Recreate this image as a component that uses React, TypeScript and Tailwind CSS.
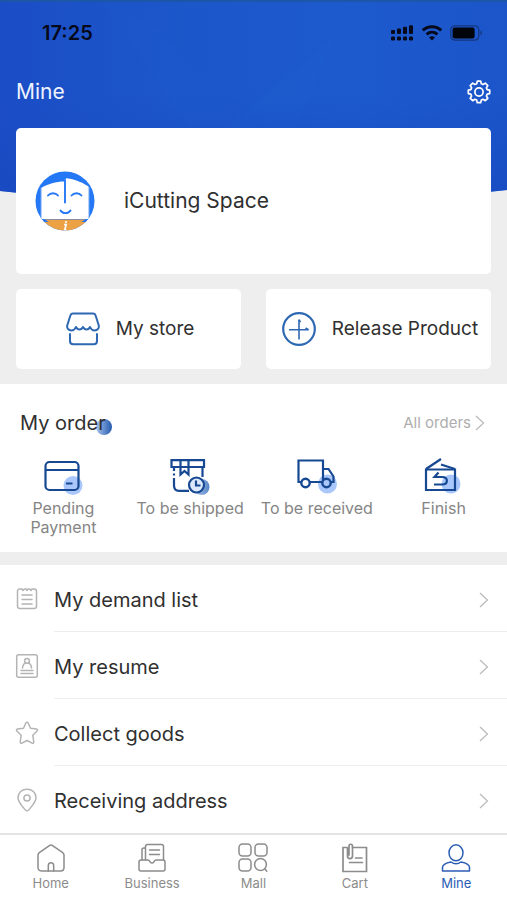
import { ReactNode, useState } from "react";

const SignalIcon = () => (
  <svg width="24" height="18" viewBox="0 0 24 18" fill="#05091a" aria-hidden="true">
    {[0, 1, 2, 3].map((i) => (
      <g key={i}>
        <rect x={1 + i * 6} y={6 - i * 1.6} width="4" height={4 + i * 1.6} rx="1" />
        <rect x={1 + i * 6} y="12.5" width="4" height="4" rx="1.2" />
      </g>
    ))}
  </svg>
);

const WifiIcon = () => (
  <svg width="22" height="16" viewBox="0 0 22 16" fill="none" stroke="#05091a" strokeWidth="3" aria-hidden="true">
    <path d="M1.8 5.4C7 .6 15 .6 20.2 5.4" />
    <path d="M5.6 9.4c3.2-2.8 7.6-2.8 10.8 0" />
    <path d="M11 15.4l-2.9-3c1.8-1.4 4-1.4 5.8 0z" fill="#05091a" stroke="none" />
  </svg>
);

const BatteryIcon = () => (
  <svg width="33" height="16" viewBox="0 0 33 16" aria-hidden="true">
    <rect x=".8" y=".8" width="28" height="14.4" rx="4" fill="none" stroke="#16367f" strokeWidth="1.2" />
    <rect x="2.6" y="2.6" width="22" height="10.8" rx="2" fill="#02040c" />
    <path d="M30.5 5.5c2 .9 2 4.1 0 5z" fill="#16367f" />
  </svg>
);

const GearIcon = () => (
  <svg width="24" height="24" viewBox="0 0 24 24" fill="none" stroke="#fff" strokeWidth="1.7" strokeLinejoin="round" aria-hidden="true">
    <path d="M10.3 1.2h3.4l.6 2.5 1.8.8 2.2-1.4 2.5 2.5-1.4 2.2.8 1.8 2.5.6v3.4l-2.5.6-.8 1.8 1.4 2.3-2.5 2.4-2.2-1.4-1.8.8-.6 2.6h-3.4l-.6-2.6-1.8-.8-2.2 1.4-2.5-2.4 1.4-2.3-.8-1.8-2.5-.6v-3.4l2.5-.6.8-1.8-1.4-2.2 2.5-2.5 2.2 1.4 1.8-.8z" />
    <circle cx="12" cy="12" r="4.1" />
  </svg>
);

const Avatar = () => (
  <svg width="60" height="60" viewBox="0 0 60 60" role="img" aria-label="iCutting Space avatar">
    <defs>
      <clipPath id="avatarCircle">
        <circle cx="30" cy="30" r="29.5" />
      </clipPath>
    </defs>
    <g clipPath="url(#avatarCircle)">
      <rect width="60" height="60" fill="#2478f6" />
      <path d="M6 17C13 13 21 10.5 29.3 10.5V9l2.2-1.800C41 8.500 49 12 54 16V48H6z" fill="#fff" />
      <path d="M6 17v31M54 16v32" stroke="#6ba2f5" strokeWidth="1" />
      <path d="M8 48.500h44L49 60H11z" fill="#eda145" />
      <path d="M0 48h9l5 3H4zM60 48h-9l-5 3h10z" fill="#2478f6" />
      <g fill="none" stroke="#2478f6" strokeWidth="1.9" strokeLinecap="round">
        <path d="M30 9v22.500" />
        <path d="M13 24.500c2.500-3 7.500-3 10 0M36.500 24.500c2.500-3 7.500-3 10 0" />
        <path d="M25.500 39.500c2 3.500 8 3.500 10 0" />
      </g>
      <path d="M29 53.500h2.200l-1.600 5.500h2" fill="none" stroke="#fff" strokeWidth="1.6" />
      <circle cx="31" cy="51" r="1.1" fill="#fff" />
    </g>
  </svg>
);

const StoreIcon = () => (
  <svg width="34" height="34" viewBox="0 0 34 34" fill="none" stroke="#2e68b3" strokeWidth="2" strokeLinecap="round" strokeLinejoin="round" aria-hidden="true">
    <path d="M7 1.500h20c1.500 0 2.300.8 2.700 2.200l3 9.500c.8 3-1.200 5.300-4 5.300-2.300 0-3.800-1.200-4.700-3.500-1.600 3.300-5.300 3.300-7 0-1.700 3.300-5.400 3.300-7 0-.9 2.300-2.400 3.500-4.700 3.500-2.800 0-4.800-2.300-4-5.300l3-9.500C4.700 2.300 5.500 1.500 7 1.500z" />
    <path d="M4 22v7c0 2 1.200 3.300 3.300 3.300h20.400c2.100 0 3.300-1.300 3.300-3.300v-7" />
  </svg>
);

const PlusIcon = () => (
  <svg width="34" height="34" viewBox="0 0 34 34" fill="none" stroke="#2e68b3" aria-hidden="true">
    <circle cx="17" cy="17" r="15.800" strokeWidth="2.2" />
    <path d="M17 8v19.500M7 17.800h19.500" strokeWidth="1.6" />
    <path d="M16.600 7.500l2 2.500M23.500 16l3 1.800" strokeWidth="1.6" />
  </svg>
);

const PaymentIcon = () => (
  <svg width="40" height="38" viewBox="0 0 40 38" fill="none" stroke="#174892" strokeWidth="2.2" aria-hidden="true">
    <circle cx="30" cy="27.500" r="9.500" fill="#a9c7fa" stroke="none" />
    <rect x="2.500" y="4" width="33" height="28" rx="4" />
    <path d="M2.500 12h33M23 25.500h6.500" />
  </svg>
);

const ShippedIcon = () => (
  <svg width="40" height="38" viewBox="0 0 40 38" fill="none" stroke="#174892" strokeWidth="2.2" aria-hidden="true">
    <defs>
      <linearGradient id="shipDot">
        <stop offset="0" stopColor="#bdd2f3" />
        <stop offset="1" stopColor="#5684c5" />
      </linearGradient>
    </defs>
    <circle cx="31.500" cy="29" r="8" fill="url(#shipDot)" stroke="none" />
    <path d="M1.500 2.200h32.500v6.800H1.500zM32.500 9v10" />
    <path d="M4 9v4M4 15.500v2M4 20v7.500c0 3.200 1.800 5.300 5 5.300h10" />
    <path d="M10.500 2.500v14l4-3.500 4 3.500v-14" />
    <circle cx="26.500" cy="27" r="7.500" fill="#dce8fb" />
    <path d="M26 22.500v5h4.500" />
  </svg>
);

const TruckIcon = () => (
  <svg width="42" height="38" viewBox="0 0 42 38" fill="none" stroke="#174892" strokeWidth="2.2" aria-hidden="true">
    <circle cx="31.500" cy="26" r="9.500" fill="#a9c7fa" stroke="none" />
    <path d="M5 24H2.500V2.500H27V24H13" />
    <path d="M27 11h5.500l5 7.500V24H35" />
    <circle cx="9.500" cy="25" r="4.200" fill="#fff" strokeWidth="2.4" />
    <circle cx="30.500" cy="25" r="4.200" fill="#a9c7fa" strokeWidth="2.4" />
  </svg>
);

const FinishIcon = () => (
  <svg width="40" height="38" viewBox="2 1 40 38" fill="none" stroke="#174892" strokeWidth="2.2" aria-hidden="true">
    <circle cx="29" cy="27" r="9.500" fill="#a9c7fa" stroke="none" />
    <path d="M4 12.500h29V33H4z" />
    <path d="M4 12L19 2M19 7.500L33 12" />
    <path d="M16.500 15.500L12.500 20H20c6.500 0 6.500 7.500 0 7.500h-8" />
  </svg>
);

const lineIcon = {
  width: 24,
  height: 24,
  viewBox: "0 0 24 24",
  fill: "none",
  stroke: "#b4b4b4",
  strokeWidth: 1.5,
  strokeLinecap: "round",
  strokeLinejoin: "round",
  "aria-hidden": true,
} as const;

const ListIcon = () => (
  <svg {...lineIcon}>
    <path d="M2.500 4.500c0-1.800.8-2.500 2.500-2.500h2l1 1.500L9.500 2h1.500l1 1.500L13 2h1.500L16 3.500 17 2h2c1.700 0 2.500.7 2.500 2.500v14.700c0 1.600-.8 2.300-2.500 2.300H5c-1.700 0-2.500-.7-2.500-2.300z" />
    <path d="M7 8h10M7 12.500h10M7 17h10" />
  </svg>
);

const ResumeIcon = () => (
  <svg {...lineIcon}>
    <rect x="1.700" y=".8" width="20.600" height="22.400" rx="2" />
    <circle cx="12" cy="6.800" r="2.400" />
    <path d="M7.500 14c.3-2.800 1.500-4.500 3-5M16.500 14c-.3-2.800-1.500-4.500-3-5M6 16.500h12M6 19.500h12" />
  </svg>
);

const StarIcon = () => (
  <svg {...lineIcon}>
    <path d="M11 1.800c.4-.9 1.600-.9 2 0l2.500 5.400 6 .8c1 .2 1.400 1.300.6 2l-4.300 4.200 1 6.900c.1 1-.8 1.600-1.700 1.100L12 19.500l-5.100 2.700c-.9.500-1.800-.1-1.700-1.100l1-6.900L1.900 10c-.8-.7-.4-1.800.6-2l6-.8z" />
  </svg>
);

const PinIcon = () => (
  <svg {...lineIcon}>
    <path d="M12 23c-1 0-9-8.500-9-13.500C3 4.500 7 1.200 12 1.200s9 3.300 9 8.300S13 23 12 23z" />
    <circle cx="12" cy="10" r="3.100" />
  </svg>
);

const Chevron = () => (
  <svg width="10" height="18" viewBox="0 0 10 18" fill="none" stroke="#bcbcbc" strokeWidth="1.3" aria-hidden="true">
    <path d="M1 2l7.500 7L1 16" />
  </svg>
);

const tabIcon = {
  width: 30,
  height: 30,
  viewBox: "0 0 30 30",
  fill: "none",
  stroke: "currentColor",
  strokeWidth: 1.5,
  strokeLinecap: "round",
  strokeLinejoin: "round",
  "aria-hidden": true,
} as const;

const HomeIcon = () => (
  <svg {...tabIcon}>
    <path d="M13.400 2.600c1-.7 2.200-.7 3.200 0l9.800 6.700c1 .7 1.600 1.600 1.600 2.800v12.400c0 2.200-1.200 3.500-3.500 3.500h-19C3.200 28 2 26.700 2 24.500V12.100c0-1.200.6-2.100 1.600-2.800z" />
    <path d="M12.300 28v-5.500c0-3.700 5.400-3.700 5.400 0V28" />
  </svg>
);

const BusinessIcon = () => (
  <svg {...tabIcon}>
    <path d="M8.500 17V3.500c0-1.200.7-2 2-2h14c1.300 0 2 .8 2 2V17M8.500 5H6.800C5.600 5 5 5.700 5 6.800V17" />
    <path d="M12.500 7h10M12.500 11.500h10" />
    <path d="M4 17h7.300c.8 0 1 .5 1.400 1.300 1 2.300 3.600 2.300 4.600 0 .4-.8.600-1.300 1.400-1.300H26c1.200 0 2 .8 2 2v7c0 1.300-.8 2-2 2H4c-1.200 0-2-.7-2-2v-7c0-1.200.8-2 2-2z" />
  </svg>
);

const MallIcon = () => (
  <svg {...tabIcon}>
    <rect x="1" y="1" width="12" height="12" rx="3.500" />
    <rect x="17" y="1" width="12" height="12" rx="3.500" />
    <rect x="1" y="16" width="12" height="12" rx="3.500" />
    <circle cx="22.500" cy="21.500" r="5.900" />
    <path d="M27 26l1.800 2.200" />
  </svg>
);

const CartIcon = () => (
  <svg {...tabIcon} strokeWidth={1.7}>
    <path d="M7 4.500H3v24h23.500v-24H12.500" strokeLinejoin="miter" />
    <path d="M7.500 5v8c0 3.500 5 3.500 5 0V3.500c0-3-3.500-3-3.500 0V12" />
    <path d="M15.500 15h6.500M9.500 19.500h13" />
  </svg>
);

const MineIcon = () => (
  <svg {...tabIcon}>
    <ellipse cx="15" cy="9.800" rx="7" ry="8" />
    <path d="M1.500 28v-3.500c0-2.800 3-4.500 8.500-5.500 3 2.200 7 2.200 10 0 5.500 1 8.500 2.700 8.500 5.500V28z" />
  </svg>
);

const orders: { name: string; icon: ReactNode }[] = [
  { name: "Pending Payment", icon: <PaymentIcon /> },
  { name: "To be shipped", icon: <ShippedIcon /> },
  { name: "To be received", icon: <TruckIcon /> },
  { name: "Finish", icon: <FinishIcon /> },
];

const links: { name: string; icon: ReactNode }[] = [
  { name: "My demand list", icon: <ListIcon /> },
  { name: "My resume", icon: <ResumeIcon /> },
  { name: "Collect goods", icon: <StarIcon /> },
  { name: "Receiving address", icon: <PinIcon /> },
];

const tabs: { name: string; icon: ReactNode }[] = [
  { name: "Home", icon: <HomeIcon /> },
  { name: "Business", icon: <BusinessIcon /> },
  { name: "Mall", icon: <MallIcon /> },
  { name: "Cart", icon: <CartIcon /> },
  { name: "Mine", icon: <MineIcon /> },
];

const HeaderBackdrop = () => (
  <svg className="absolute inset-x-0 top-0 h-[200px] w-full" viewBox="0 0 507 200" preserveAspectRatio="none" aria-hidden="true">
    <defs>
      <linearGradient id="sky" x1="0" y1="0" x2="1" y2="0">
        <stop offset="0" stopColor="#1b4dc6" />
        <stop offset=".35" stopColor="#1c57ca" />
        <stop offset=".7" stopColor="#1d5ace" />
        <stop offset="1" stopColor="#1b55c9" />
      </linearGradient>
      <linearGradient id="shade" x1="0" y1="0" x2="0" y2="1">
        <stop offset=".45" stopColor="#1848c0" stopOpacity="0" />
        <stop offset="1" stopColor="#1848c0" stopOpacity=".7" />
      </linearGradient>
    </defs>
    <path d="M0 0h507v190Q253 220 0 191z" fill="url(#sky)" />
    <path d="M350 0L296 128H225L330 40z" fill="#1f66cf" opacity=".22" />
    <path d="M100 0l90 128h60L160 30z" fill="#1f60cf" opacity=".15" />
    <path d="M0 0h507v190Q253 220 0 191z" fill="url(#shade)" />
    <path d="M0 0h507v2H0z" fill="#1b56a8" />
  </svg>
);

const App = () => {
  const [activeTab, setActiveTab] = useState("Mine");

  return (
    <div className="flex min-h-screen flex-col bg-white font-['Inter','Liberation_Sans',sans-serif] text-[#303030]">
      <div className="relative bg-[#eeeeee] px-4 pb-[15px]">
        <HeaderBackdrop />
        <div className="relative">
          <div className="flex h-[66px] items-center justify-between pr-2 pl-[26px]">
            <span className="text-[20px] font-semibold text-[#05091a]">17:25</span>
            <div className="flex items-center gap-[7px]">
              <SignalIcon />
              <WifiIcon />
              <BatteryIcon />
            </div>
          </div>
          <header className="flex h-[62px] items-start justify-between pt-3">
            <h1 className="text-[21px] leading-7 text-[#eef3ff]">Mine</h1>
            <button type="button" aria-label="Settings" className="flex h-7 items-center">
              <GearIcon />
            </button>
          </header>
          <section className="flex h-[146px] items-center gap-[29px] rounded-[5px] bg-white px-[19px]">
            <Avatar />
            <h2 className="text-[21px]">iCutting Space</h2>
          </section>
          <div className="mt-[15px] grid grid-cols-2 gap-[25px]">
            <button type="button" className="flex h-20 items-center justify-center gap-4 rounded-[5px] bg-white pl-[3px] text-[19px] whitespace-nowrap">
              <StoreIcon />
              My store
            </button>
            <button type="button" className="flex h-20 items-center justify-center gap-4 rounded-[5px] bg-white pl-[3px] text-[19px] whitespace-nowrap">
              <PlusIcon />
              Release Product
            </button>
          </div>
        </div>
      </div>

      <section className="h-[168px]">
        <div className="flex h-[74px] items-center justify-between pt-1 pr-[22px] pl-5">
          <h2 className="relative text-[20px]">
            <span className="absolute -right-[6px] bottom-[3px] h-4 w-4 rounded-full bg-linear-to-r from-[#a9c4ee] to-[#225aac]" />
            <span className="relative">My order</span>
          </h2>
          <a href="#orders" className="flex items-center gap-1 text-[15px] text-[#aeaeae]">
            All orders
            <Chevron />
          </a>
        </div>
        <ul className="grid grid-cols-4">
          {orders.map((order) => (
            <li key={order.name}>
              <a href="#orders" className="flex flex-col items-center gap-[3px] text-center text-[16px] leading-[19px] text-[#858585]">
                {order.icon}
                <span className="max-w-[118px]">{order.name}</span>
              </a>
            </li>
          ))}
        </ul>
      </section>

      <div className="h-[13px] bg-[#eeeeee]" />

      <ul className="grow">
        {links.map((link) => (
          <li key={link.name} className="group">
            <a href="#list" className="flex items-center gap-[15px] pl-[15px]">
              {link.icon}
              <span className="flex h-[67px] grow items-center justify-between border-b border-[#ededed] pt-[3px] pr-[18px] text-[20px] group-last:border-b-0">
                {link.name}
                <Chevron />
              </span>
            </a>
          </li>
        ))}
      </ul>

      <nav className="grid h-[67px] grid-cols-5 border-t-2 border-[#e4e4e4] bg-white">
        {tabs.map((tab) => (
          <button
            key={tab.name}
            type="button"
            onClick={() => setActiveTab(tab.name)}
            className={`flex flex-col items-center pt-2 text-[13px] leading-5 ${
              activeTab === tab.name ? "text-[#2b5db4]" : "text-[#8c8c8c]"
            }`}
          >
            {tab.icon}
            {tab.name}
          </button>
        ))}
      </nav>
    </div>
  );
};

export default App;
